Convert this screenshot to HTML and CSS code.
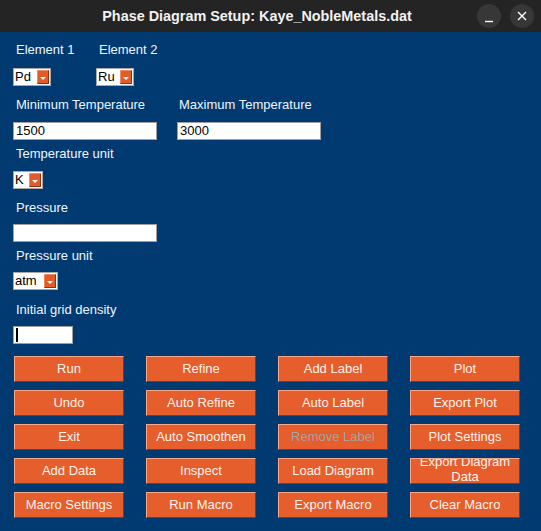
FILE: index.html
```html
<!DOCTYPE html>
<html>
<head>
<meta charset="utf-8">
<link rel="stylesheet" href="styles.css">
</head>
<body>
<div class="titlebar">
  <div class="title">Phase Diagram Setup: Kaye_NobleMetals.dat</div>
  <div class="wbtns">
    <div class="wbtn"><svg width="24" height="24" viewBox="0 0 24 24"><line x1="8" y1="17.5" x2="16" y2="17.5" stroke="#fff" stroke-width="1.4"/></svg></div>
    <div class="wbtn"><svg width="24" height="24" viewBox="0 0 24 24"><path d="M8 8 L16 16 M16 8 L8 16" stroke="#fff" stroke-width="1.4"/></svg></div>
  </div>
</div>
<div class="main">
  <div class="row r1">
    <span class="lbl w83">Element 1</span>
    <span class="lbl">Element 2</span>
  </div>
  <div class="row r2">
    <div class="dd w38"><span class="ddtxt">Pd</span><span class="ind"></span></div>
    <div class="dd w38 ml45"><span class="ddtxt">Ru</span><span class="ind"></span></div>
  </div>
  <div class="row r3">
    <span class="lbl w163">Minimum Temperature</span>
    <span class="lbl">Maximum Temperature</span>
  </div>
  <div class="row r4">
    <div class="entry w144">1500</div>
    <div class="entry w144 ml20">3000</div>
  </div>
  <div class="row r5"><span class="lbl">Temperature unit</span></div>
  <div class="row r6"><div class="dd w30"><span class="ddtxt">K</span><span class="ind"></span></div></div>
  <div class="row r7"><span class="lbl">Pressure</span></div>
  <div class="row r8"><div class="entry w144"></div></div>
  <div class="row r9"><span class="lbl">Pressure unit</span></div>
  <div class="row r10"><div class="dd w45"><span class="ddtxt">atm</span><span class="ind"></span></div></div>
  <div class="row r11"><span class="lbl">Initial grid density</span></div>
  <div class="row r12"><div class="entry w60"><span class="caret"></span></div></div>
  <div class="buttons">
    <div class="btn">Run</div>
    <div class="btn">Refine</div>
    <div class="btn">Add Label</div>
    <div class="btn">Plot</div>
    <div class="btn">Undo</div>
    <div class="btn">Auto Refine</div>
    <div class="btn">Auto Label</div>
    <div class="btn">Export Plot</div>
    <div class="btn">Exit</div>
    <div class="btn">Auto Smoothen</div>
    <div class="btn disabled">Remove Label</div>
    <div class="btn">Plot Settings</div>
    <div class="btn">Add Data</div>
    <div class="btn">Inspect</div>
    <div class="btn">Load Diagram</div>
    <div class="btn two">Export Diagram Data</div>
    <div class="btn">Macro Settings</div>
    <div class="btn">Run Macro</div>
    <div class="btn">Export Macro</div>
    <div class="btn">Clear Macro</div>
  </div>
</div>
</body>
</html>
```
FILE: styles.css
```css
html, body {
  margin: 0;
  padding: 0;
  width: 541px;
  height: 531px;
  overflow: hidden;
  background: #013a70;
  font-family: "Liberation Sans", Arial, sans-serif;
  font-size: 13px;
}
.titlebar {
  height: 32px;
  background: #242424;
  position: relative;
  display: flex;
  align-items: center;
  justify-content: center;
}
.title {
  color: #f2f2f2;
  font-family: "Liberation Sans", sans-serif;
  font-weight: bold;
  font-size: 14.4px;
  margin-right: 27px;
}
.wbtns {
  position: absolute;
  right: 7px;
  top: 4px;
  display: flex;
  gap: 9px;
}
.wbtn {
  width: 24px;
  height: 24px;
  border-radius: 50%;
  background: #373737;
}
.wbtn svg { display: block; }
.main {
  padding-left: 13px;
}
.row {
  display: flex;
  align-items: center;
}
.lbl {
  color: #eef6ff;
  line-height: 16px;
  padding-left: 3px;
}
.w83 { width: 80px; }
.w163 { width: 160px; }
.r1 { margin-top: 10px; height: 16px; }
.r2 { margin-top: 10px; }
.r3 { margin-top: 11px; height: 16px; }
.r4 { margin-top: 9px; }
.r5 { margin-top: 6px; height: 16px; }
.r6 { margin-top: 9px; }
.r7 { margin-top: 11px; height: 16px; }
.r8 { margin-top: 8px; }
.r9 { margin-top: 6px; height: 16px; }
.r10 { margin-top: 8px; }
.r11 { margin-top: 12px; height: 16px; }
.r12 { margin-top: 8px; }
.ml45 { margin-left: 45px; }
.ml20 { margin-left: 20px; }
.dd {
  box-sizing: border-box;
  height: 18px;
  background: #fff;
  border: 1px solid #a8a8a8;
  display: flex;
  align-items: center;
  justify-content: space-between;
  padding-left: 1px;
  padding-right: 1px;
  color: #000;
}
.ddtxt { line-height: 16px; }
.w38 { width: 38px; }
.w30 { width: 30px; }
.w45 { width: 45px; }
.ind {
  box-sizing: border-box;
  width: 12px;
  height: 14px;
  background: #e35b28;
  border-right: 1px solid #8c3414;
  border-bottom: 1px solid #8c3414;
  border-top: 1px solid #f08a62;
  border-left: 1px solid #f08a62;
  position: relative;
}
.ind::after {
  content: "";
  position: absolute;
  left: 2px;
  top: 6px;
  border-left: 3px solid transparent;
  border-right: 3px solid transparent;
  border-top: 3px solid #fff;
}
.entry {
  box-sizing: border-box;
  height: 18px;
  background: #fff;
  border: 1px solid #a0a0a0;
  color: #000;
  line-height: 16px;
  padding-left: 2px;
  position: relative;
}
.w144 { width: 144px; }
.w60 { width: 60px; }
.caret {
  position: absolute;
  left: 2px;
  top: 1px;
  width: 2px;
  height: 14px;
  background: #000;
}
.buttons {
  margin-top: 12px;
  margin-left: 1px;
  display: grid;
  grid-template-columns: repeat(4, 110px);
  grid-auto-rows: 26px;
  column-gap: 22px;
  row-gap: 8px;
}
.btn {
  box-sizing: border-box;
  background: #e55e2b;
  border-top: 1px solid #f4a78a;
  border-left: 1px solid #f4a78a;
  border-right: 1px solid #8a3516;
  border-bottom: 1px solid #8a3516;
  color: #fff3f0;
  text-align: center;
  display: flex;
  align-items: center;
  justify-content: center;
  line-height: 15px;
  overflow: hidden;
  padding: 0 3px 2px;
}
.btn.two { padding-bottom: 5px; }
.btn.disabled { color: #a3a3a3; }
```
